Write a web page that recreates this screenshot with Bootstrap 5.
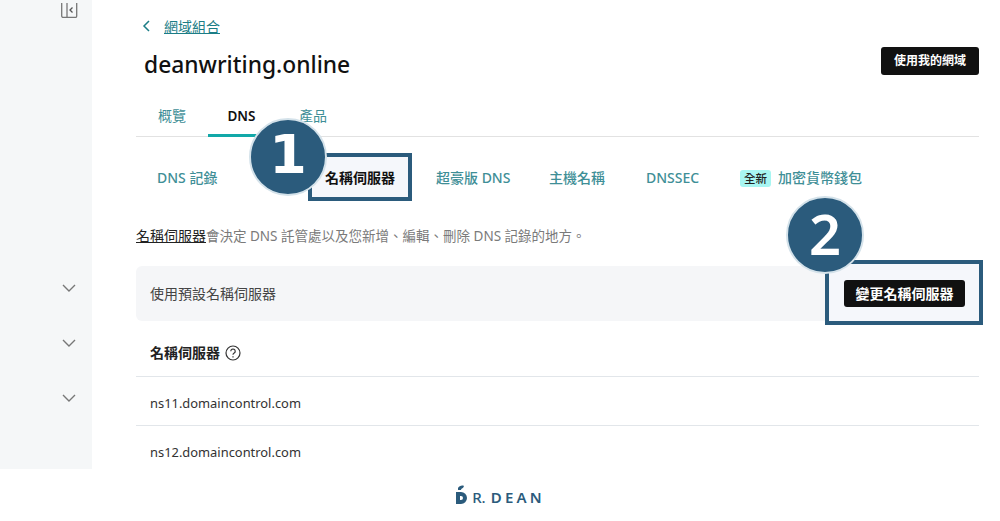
<!DOCTYPE html>
<html lang="zh-Hant">
<head>
  <meta charset="UTF-8" />
  <title>deanwriting.online DNS</title>
  <link href="https://cdn.jsdelivr.net/npm/bootstrap@5.3.0/dist/css/bootstrap.min.css" rel="stylesheet">
  <style>
    html, body { height: 521px; overflow: hidden; }
    body { font-family: "Noto Sans", "Noto Sans CJK TC", sans-serif; font-size: 14px; color: #111; background: #fff; position: relative; }
    .app-shell { height: 469px; overflow: hidden; }
    .side-rail { width: 92px; background: #f5f7f8; padding-left: 61px; flex-shrink: 0; }
    .rail-toggle { height: 15px; margin-top: -2px; margin-bottom: 263px; }
    .rail-chevron { height: 55px; }
    .main-col { padding: 17px 21px 0 44px; min-width: 0; }
    .back-row { height: 18px; margin-left: 6px; gap: 14px; }
    .back-row a { color: #1b7d86; font-size: 14px; }
    .domain-title { font-size: 22.8px; font-weight: 500; margin: 0 0 0 8px; line-height: 36px; }
    .title-row { margin-top: 12px; height: 34px; }
    .dark-btn { background: #111; color: #fff; border: 0; border-radius: 3px; font-size: 12px; font-weight: 700; padding: 0; }
    .use-btn { width: 98px; height: 28px; }
    .main-tabs { margin-top: 18px; height: 38px; border-bottom: 1px solid #e2e2e2; padding-left: 8px; }
    .main-tabs span { color: #3f8f97; font-size: 14px; height: 38px; line-height: 34px; }
    .tab-first { width: 64px; padding-left: 14px; }
    .tab-dns { width: 64px; text-align: center; color: #111 !important; font-weight: 600; font-size: 13.5px !important; border-bottom: 3px solid #12a8a8; padding-left: 3px; }
    .tab-last { margin-left: 27px; }
    .sub-tabs { height: 40px; margin-top: 21px; position: relative; }
    .sub-tabs > span { position: absolute; top: 0; color: #3f8f97; font-size: 14px; font-weight: 500; line-height: 40px; white-space: nowrap; }
    .sub-tabs > .sub-active { color: #111; font-weight: 700; z-index: 3; }
    .new-tag { background: #a8f6f2; color: #222; font-size: 11.5px; font-weight: 500; border-radius: 3px; padding: 1px 4px; margin-right: 7px; }
    .intro-line { margin-top: 28px; line-height: 20px; color: #7a7a7a; font-size: 13.5px; }
    .intro-line u { color: #222; font-size: 14px; }
    .default-box { background: #f5f6f8; border-radius: 6px; height: 55px; margin-top: 20px; padding: 0 14px; color: #444; }
    .change-btn { width: 121px; height: 27px; font-size: 14px; position: relative; z-index: 3; }
    .ns-head { height: 56px; border-bottom: 1px solid #e2e6ea; padding: 8px 0 0 14px; font-weight: 700; font-size: 14px; gap: 5px; color: #222; }
    .ns-row { height: 49px; border-bottom: 1px solid #e2e6ea; padding: 5px 0 0 14px; color: #333; font-size: 12.9px; }
    .step-dot { position: absolute; width: 78px; height: 78px; border-radius: 50%; background: #2b5b7c; border: 2px solid #d4e2ea; color: #fff; font-weight: 600; font-size: 56px; line-height: 70px; text-align: center; font-family: "Noto Sans", sans-serif; z-index: 4; }
    .step-foot { font-family: "DejaVu Sans", sans-serif; font-weight: 700; font-size: 54px; }
    .step-frame { position: absolute; border: 4px solid #2b5b7c; z-index: 2; background: #f5f7fb; }
    .logo-foot { height: 52px; color: #2b5b7c; font-family: "Noto Sans", sans-serif; font-weight: 600; font-size: 15px; letter-spacing: 3.2px; padding-top: 5px; }
    .logo-mark { margin-right: 4px; margin-top: -5px; }
    .logo-r { font-weight: 500; letter-spacing: 0; margin-right: 5px; }
  </style>
</head>
<body>
  <div class="d-flex app-shell">
    <div class="side-rail">
      <div class="rail-toggle">
        <svg width="17" height="15" viewBox="0 0 17 15" fill="none" stroke="#777" stroke-width="1.3"><rect x=".7" y="-2" width="15" height="16.500" rx="1.500"/><path d="M6 -2v16.500"/><path d="M11.500 4.500l-2.500 2.500 2.500 2.500" stroke="#555"/></svg>
      </div>
      <div class="rail-chevron"><svg width="16" height="10" viewBox="0 0 16 10" fill="none" stroke="#777" stroke-width="1.4"><path d="M2 2l6 6 6-6"/></svg></div>
      <div class="rail-chevron"><svg width="16" height="10" viewBox="0 0 16 10" fill="none" stroke="#777" stroke-width="1.4"><path d="M2 2l6 6 6-6"/></svg></div>
      <div class="rail-chevron"><svg width="16" height="10" viewBox="0 0 16 10" fill="none" stroke="#777" stroke-width="1.4"><path d="M2 2l6 6 6-6"/></svg></div>
    </div>
    <div class="main-col flex-grow-1">
      <div class="d-flex align-items-center back-row">
        <svg width="8" height="12" viewBox="0 0 8 12" fill="none" stroke="#1b7d86" stroke-width="1.5"><path d="M7 1L2 6l5 5"/></svg>
        <a href="#">網域組合</a>
      </div>
      <div class="d-flex justify-content-between title-row">
        <h1 class="domain-title">deanwriting.online</h1>
        <button class="dark-btn use-btn">使用我的網域</button>
      </div>
      <div class="d-flex main-tabs">
        <span class="tab-first">概覽</span>
        <span class="tab-dns">DNS</span>
        <span class="tab-last">產品</span>
      </div>
      <div class="sub-tabs">
        <span style="left:21px">DNS 記錄</span>
        <span class="sub-active" style="left:189px">名稱伺服器</span>
        <span style="left:300px">超豪版 DNS</span>
        <span style="left:413px">主機名稱</span>
        <span style="left:510px">DNSSEC</span>
        <span style="left:604px"><span class="new-tag">全新</span>加密貨幣錢包</span>
      </div>
      <div class="intro-line"><u>名稱伺服器</u>會決定 DNS 託管處以及您新增、編輯、刪除 DNS 記錄的地方。</div>
      <div class="d-flex align-items-center justify-content-between default-box">
        <span>使用預設名稱伺服器</span>
        <button class="dark-btn change-btn">變更名稱伺服器</button>
      </div>
      <div class="d-flex align-items-center ns-head">
        <span>名稱伺服器</span>
        <svg width="16" height="16" viewBox="0 0 16 16" fill="none" stroke="#333" stroke-width="1.2"><circle cx="8" cy="8" r="7"/><path d="M5.800 6.200a2.200 2.200 0 1 1 3.400 1.900c-.8.500-1.200.9-1.200 1.700"/><path d="M8 11.200v1.200"/></svg>
      </div>
      <div class="d-flex align-items-center ns-row">ns11.domaincontrol.com</div>
      <div class="d-flex align-items-center ns-row">ns12.domaincontrol.com</div>
    </div>
  </div>
  <div class="d-flex justify-content-center align-items-center logo-foot">
    <svg class="logo-mark" width="13" height="20" viewBox="0 0 13 20" fill="#2b5b7c"><path d="M3 3c1-2 4-3 6-2l-1 2C7 3 6 4 6 5H3z"/><path d="M1 7h5a6 6 0 0 1 0 12H1zM5 11v4h1a2 2 0 0 0 0-4z" fill-rule="evenodd"/></svg>
    <span class="logo-r">R.</span><span>DEAN</span>
  </div>

  <div class="step-frame" style="left:308px;top:153px;width:104px;height:48px"></div>
  <div class="step-dot step-foot" style="left:249px;top:118px">1</div>
  <div class="step-frame" style="left:825px;top:260px;width:158px;height:65px"></div>
  <div class="step-dot" style="left:786px;top:196px">2</div>
</body>
</html>
